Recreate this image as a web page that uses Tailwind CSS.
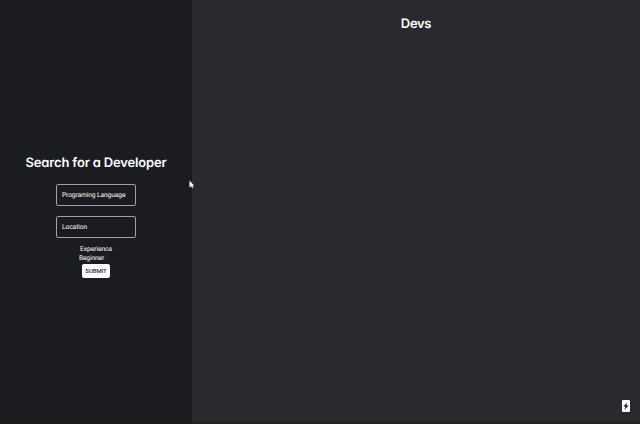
<!DOCTYPE html>
<html lang="en">
<head>
<meta charset="utf-8">
<title>Devs</title>
<script src="https://cdn.jsdelivr.net/npm/@tailwindcss/browser@4"></script>
</head>
<body class="h-screen overflow-hidden bg-[#292a2d] font-['Roboto',sans-serif] text-white [text-rendering:geometricPrecision]">
<div class="relative flex h-[424px] w-[640px] border-b-2 border-[#241c22]">
  <aside class="flex w-48 flex-col items-center bg-[#1b1c1f] pt-[154px]">
    <h1 class="h-[17px] whitespace-nowrap font-['Inter',sans-serif] text-[13px] leading-[18px] font-semibold tracking-[-0.17px] [font-feature-settings:'cv11']">Search for a Developer</h1>
    <div class="mt-[13px] flex h-[22px] w-20 items-center rounded-[2px] border border-[#a2a2aa] pl-[5px] text-[6.7px] leading-none tracking-[-0.12px] whitespace-nowrap text-white">Programing Language</div>
    <div class="mt-[10px] flex h-[22px] w-20 items-center rounded-[2px] border border-[#a2a2aa] pl-[5px] text-[6.7px] leading-none tracking-[-0.1px] text-white">Location</div>
    <label class="mt-[6px] h-[9px] text-[6.7px] leading-[10px] tracking-[-0.08px] text-white">Experience</label>
    <div class="mr-[9px] h-[9px] text-[6.7px] leading-[10px] tracking-[-0.15px] text-white">Beginner</div>
    <button class="mt-[2px] h-[14px] w-7 rounded-[2px] bg-[#fafafc] text-[6px] leading-[14px] font-medium tracking-[-0.1px] text-[#333438]">SUBMIT</button>
  </aside>
  <main class="flex flex-1 justify-center pt-[15px]">
    <h2 class="h-[18px] font-['Inter',sans-serif] text-[13px] leading-[18px] font-semibold tracking-[-0.3px]">Devs</h2>
  </main>
  <svg class="absolute top-[400px] left-[622px] h-3 w-2" viewBox="0 0 8 12"><rect width="8" height="12" rx="1" fill="#fff"/><path d="M4.9 2.5 1.3 6.6h2l-.8 3.2L6.8 5.4H4.4z" fill="#202126"/></svg>
  <svg class="absolute top-[180px] left-[189px] h-[9px] w-[6px]" viewBox="0 0 6 9"><path d="M.5.5v7l1.6-1.4 1 2.2 1.2-.6-1-2h2z" fill="#fff"/></svg>
</div>
</body>
</html>
